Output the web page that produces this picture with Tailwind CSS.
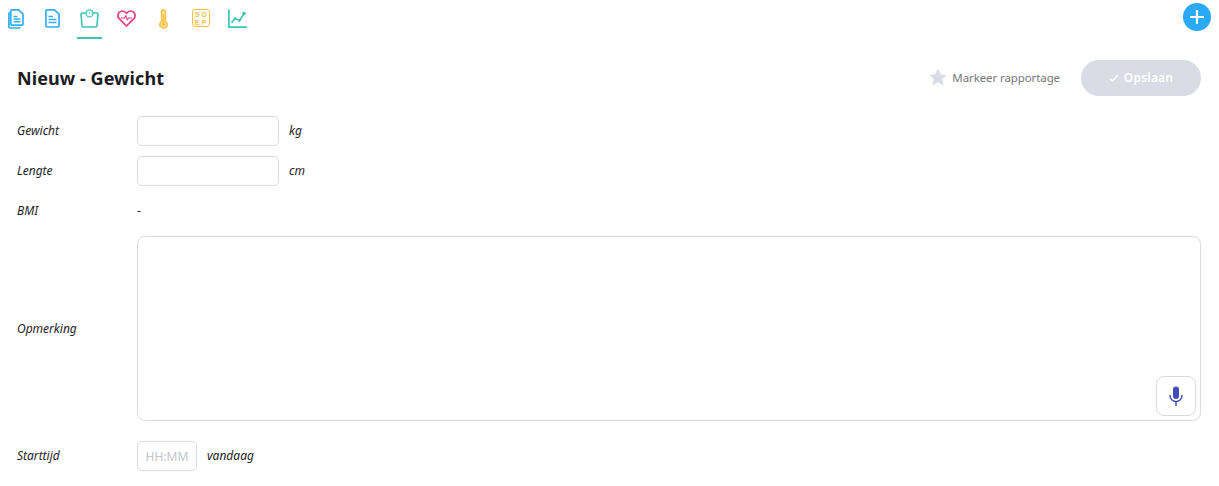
<!DOCTYPE html>
<html lang="nl">
<head>
<meta charset="utf-8">
<title>Nieuw - Gewicht</title>
<script src="https://cdn.jsdelivr.net/npm/@tailwindcss/browser@4"></script>
</head>
<body class="bg-white font-['Noto_Sans','Inter',sans-serif] text-[#1d1d1f] h-[486px] w-[1219px] overflow-hidden">
<div class="flex h-[39px] pl-[3px] pr-[8px] items-start justify-between">
  <nav class="flex gap-[12px]">
    <div class="w-[25px] h-[39px] flex justify-center pt-[9px]">
      <svg width="16" height="20" viewBox="0 0 16 20" fill="none" stroke="#35adf6" stroke-width="1.700"><path d="M2.500 3.500H2A1.200 1.200 0 0 0 .9 4.700V17.800A1.200 1.200 0 0 0 2 19H10.500A1.500 1.500 0 0 0 12 17.800"/><path d="M4 .9h6.500L15 5.200V15a1.200 1.200 0 0 1-1.200 1.200H4A1.200 1.200 0 0 1 2.800 15V2.100A1.200 1.200 0 0 1 4 .9z" fill="#fff"/><path d="M5.500 7.500h4M5.500 10h7M5.500 12.800h7" stroke-width="1.400"/></svg>
    </div>
    <div class="w-[25px] h-[39px] flex justify-center pt-[9px]">
      <svg width="15" height="19" viewBox="0 0 15 19" fill="none" stroke="#35adf6" stroke-width="1.700"><path d="M2 .9h7.500L14.100 5.200V16.800a1.200 1.200 0 0 1-1.200 1.200H2A1.200 1.200 0 0 1 .9 16.800V2.100A1.200 1.200 0 0 1 2 .9z" fill="#fff"/><path d="M3.500 7.500h4.500M3.500 10.500h8M3.500 13.500h8" stroke-width="1.400"/></svg>
    </div>
    <div class="w-[25px] h-[39px] flex justify-center border-b-2 border-[#3cc4b4] pt-[9px]">
      <svg width="19" height="19" viewBox="0 0 19 19" fill="none" stroke="#3cc4b4" stroke-width="1.600"><path d="M2 4h15a1 1 0 0 1 1 1.100l-1.100 11.900a1 1 0 0 1-1 1H3.100a1 1 0 0 1-1-1L1 5.100A1 1 0 0 1 2 4z" fill="#fff"/><circle cx="9.500" cy="4.400" r="3.500" fill="#fff" stroke-width="1.300"/><path d="M9.500 3V4.600" stroke-width="1"/></svg>
    </div>
    <div class="w-[25px] h-[37px] flex justify-center pt-[10px]">
      <svg width="19" height="17" viewBox="0 0 19 17" fill="none" stroke="#ee3a83" stroke-width="1.700" stroke-linejoin="round"><path d="M9.500 16 2.100 8.700A4.500 4.500 0 0 1 .9 5.500 4.500 4.500 0 0 1 5.400 1C7 1 8.500 1.900 9.500 3.300 10.500 1.900 12 1 13.600 1A4.500 4.500 0 0 1 18.100 5.500 4.500 4.500 0 0 1 16.900 8.700z" fill="#fff"/><path d="M4 8h3.500l1.300-2.300 1.500 4.300 1.300-2H15" stroke-width="1.100"/></svg>
    </div>
    <div class="w-[25px] h-[37px] flex justify-center pt-[9px]">
      <svg width="9" height="20" viewBox="0 0 9 20" fill="none" stroke="#fbbf45" stroke-width="1.700"><path d="M2.700 12.300V2.700a1.800 1.800 0 0 1 3.600 0v9.600a3.600 3.600 0 1 1-3.600 0z" fill="#fff3d6"/><circle cx="4.500" cy="15.300" r="1.200" fill="#fbbf45"/><path d="M4.500 5v9" stroke-width="1.300"/></svg>
    </div>
    <div class="w-[25px] h-[37px] flex justify-center pt-[9px]">
      <div class="w-[18px] h-[18px] rounded-[3px] border-[1.5px] border-[#fbbf45] bg-white grid grid-cols-2 content-center justify-items-center px-[1px] font-['Liberation_Sans',sans-serif] text-[7px] leading-[7px] gap-y-[1px] font-bold text-[#fbbf45]">
        <span>S</span><span>O</span><span>E</span><span>P</span>
      </div>
    </div>
    <div class="w-[25px] h-[37px] flex justify-center pt-[9px]">
      <svg width="19" height="19" viewBox="0 0 19 19" fill="none" stroke="#3cc4b4" stroke-width="1.700"><path d="M.9.500V18.100H19"/><path d="M3.500 14l3.500-4.500 4.500 2L16 5" stroke-width="1.500"/><circle cx="7" cy="9.500" r="1.300" fill="#3cc4b4" stroke="none"/><circle cx="11.500" cy="11.500" r="1.300" fill="#3cc4b4" stroke="none"/><circle cx="16" cy="4.500" r="1.800" fill="#3cc4b4" stroke="none"/></svg>
    </div>
  </nav>
  <button class="mt-[3px] w-[28px] h-[28px] rounded-full bg-[#2aa9f5] flex items-center justify-center">
    <svg width="14" height="14" viewBox="0 0 14 14" stroke="#fff" stroke-width="2.200" stroke-linecap="round"><path d="M7 1v12M1 7h12"/></svg>
  </button>
</div>

<main class="px-[17px] pr-[18px]">
  <header class="flex items-center justify-between h-[36px] mt-[21px] mb-[20px]">
    <h1 class="text-[18px] font-bold tracking-[0.07px] text-[#1d1d1f]">Nieuw - Gewicht</h1>
    <div class="flex items-center">
      <svg width="18" height="18" viewBox="0 0 18 18" fill="#d9dbe5" class="mr-[5px] mb-[2px]"><path d="M9 .5l2.600 5.700 6.200.7-4.600 4.200 1.300 6.100L9 14.200l-5.500 3 1.300-6.100L.2 6.900l6.200-.7z"/></svg>
      <span class="text-[11.500px] tracking-[-0.1px] text-[#77787d]">Markeer rapportage</span>
      <button class="ml-[21px] w-[120px] h-[36px] rounded-full bg-[#d9dbe5] text-white text-[12px] font-semibold tracking-[0.2px] flex items-center justify-center gap-[5px]">
        <svg width="10" height="8" viewBox="0 0 10 8" fill="none" stroke="#fff" stroke-width="1.400"><path d="M1 4.500 3.500 7 9 1"/></svg>
        Opslaan
      </button>
    </div>
  </header>

  <form class="flex flex-col text-[12px] italic">
    <div class="flex items-center h-[30px] mb-[10px]">
      <label class="w-[120px]">Gewicht</label>
      <input class="w-[142px] h-[30px] rounded-[5px] border border-[#d9dbe5] bg-white" type="text">
      <span class="ml-[10px]">kg</span>
    </div>
    <div class="flex items-center h-[30px] mb-[10px]">
      <label class="w-[120px]">Lengte</label>
      <input class="w-[142px] h-[30px] rounded-[5px] border border-[#d9dbe5] bg-white" type="text">
      <span class="ml-[10px]">cm</span>
    </div>
    <div class="flex items-center h-[30px] mb-[10px]">
      <label class="w-[120px]">BMI</label>
      <span class="not-italic">-</span>
    </div>
    <div class="flex items-center h-[185px] mb-[20px]">
      <label class="w-[120px]">Opmerking</label>
      <div class="relative flex-1 h-[185px]">
        <textarea class="block w-full h-full rounded-[8px] border border-[#d9dbe5] resize-none bg-white"></textarea>
        <button type="button" class="absolute right-[5px] bottom-[5px] w-[40px] h-[40px] rounded-[8px] border border-[#d9dbe5] bg-white flex items-center justify-center">
          <svg width="14" height="20" viewBox="0 0 14 20" fill="#3f4db8"><rect x="4" y="0.500" width="6" height="12.500" rx="3"/><path d="M1 9.500a6 6 0 0 0 12 0" fill="none" stroke="#3f4db8" stroke-width="1.500" stroke-linecap="round"/><rect x="6.300" y="15" width="1.400" height="5"/></svg>
        </button>
      </div>
    </div>
    <div class="flex items-center h-[30px]">
      <label class="w-[120px]">Starttijd</label>
      <input class="w-[60px] h-[30px] rounded-[5px] border border-[#d9dbe5] bg-white text-center not-italic text-[12px] placeholder:text-[#c4c5c9]" type="text" placeholder="HH:MM">
      <span class="ml-[10px]">vandaag</span>
    </div>
  </form>
</main>
</body>
</html>
